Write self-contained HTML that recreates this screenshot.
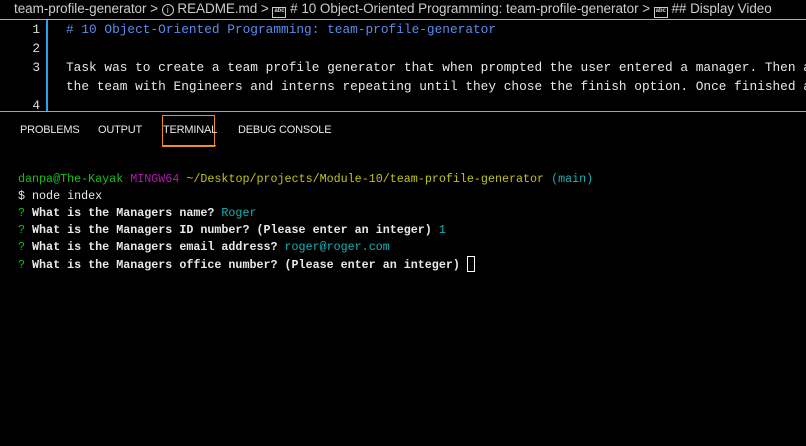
<!DOCTYPE html>
<html><head><meta charset="utf-8"><style>
*{margin:0;padding:0;box-sizing:border-box}
body{width:806px;height:446px;background:#000;overflow:hidden;position:relative;font-family:"Liberation Sans",sans-serif;color:#ccc}
.bc{position:absolute;left:14px;top:1px;font-size:13.5px;white-space:nowrap;color:#cccccc;letter-spacing:-0.05px}
.bc .ic{display:inline-block;width:14px;height:11px;border:1.5px solid #ccc;font-size:6px;line-height:7px;text-align:center;vertical-align:1px;font-weight:bold}
.bc .ci{display:inline-block;width:12px;height:12px;border:1px solid #ccc;border-radius:50%;font-size:9px;line-height:10px;text-align:center;vertical-align:0px}
.hl{position:absolute;left:0;width:806px;height:1px;background:#8ab8d8}
.gut{position:absolute;left:46px;top:20px;width:2px;height:91px;background:#2aa0f0}
.ed{position:absolute;top:20px;font-family:"Liberation Mono",monospace;font-size:12.8px;line-height:19px;white-space:pre;color:#e8e8e8}
.ln{left:0;width:40px;text-align:right;color:#ddd}
.tx{left:66px}
.blue{color:#5a8cf0}
.tabs{position:absolute;top:124px;font-size:11px;color:#e8e8e8;white-space:nowrap;letter-spacing:-0.2px}
.term{position:absolute;left:18px;top:171px;font-family:"Liberation Mono",monospace;font-size:11.7px;line-height:17px;white-space:pre;color:#e8e8e8}
.g{color:#13c313}.m{color:#b418b4}.y{color:#c2c21b}.c{color:#17b3b3}
b{font-weight:bold}
.cur{display:inline-block;width:8px;height:16px;border:1px solid #fff;vertical-align:-4px}
</style></head><body>
<div class="bc">team-profile-generator &gt; <span class="ci">i</span> README.md &gt; <span class="ic">abc</span> # 10 Object-Oriented Programming: team-profile-generator &gt; <span class="ic">abc</span> ## Display Video</div>
<div class="hl" style="top:19px"></div>
<div class="gut"></div>
<div class="ed ln">1
2
3

4</div>
<div class="ed tx"><span class="blue"># 10 Object-Oriented Programming: team-profile-generator</span>

Task was to create a team profile generator that when prompted the user entered a manager. Then a
the team with Engineers and interns repeating until they chose the finish option. Once finished a
</div>
<div class="hl" style="top:111px;background:#80b0d0"></div>
<div class="tabs" style="left:20px">PROBLEMS</div>
<div class="tabs" style="left:98px">OUTPUT</div>
<div style="position:absolute;left:162px;top:115px;width:53px;height:32px;border:1px solid #f08a24"></div>
<div style="position:absolute;left:162px;top:145px;width:54px;height:1px;background:#8aa8c0"></div>
<div class="tabs" style="left:163px">TERMINAL</div>
<div class="tabs" style="left:238px">DEBUG CONSOLE</div>
<div class="term"><span class="g">danpa@The-Kayak</span> <span class="m">MINGW64</span> <span class="y">~/Desktop/projects/Module-10/team-profile-generator</span> <span class="c">(main)</span>
$ node index
<span class="g">?</span> <b>What is the Managers name?</b> <span class="c">Roger</span>
<span class="g">?</span> <b>What is the Managers ID number? (Please enter an integer)</b> <span class="c">1</span>
<span class="g">?</span> <b>What is the Managers email address?</b> <span class="c">roger@roger.com</span>
<span class="g">?</span> <b>What is the Managers office number? (Please enter an integer)</b> <span class="cur"></span></div>
</body></html>
